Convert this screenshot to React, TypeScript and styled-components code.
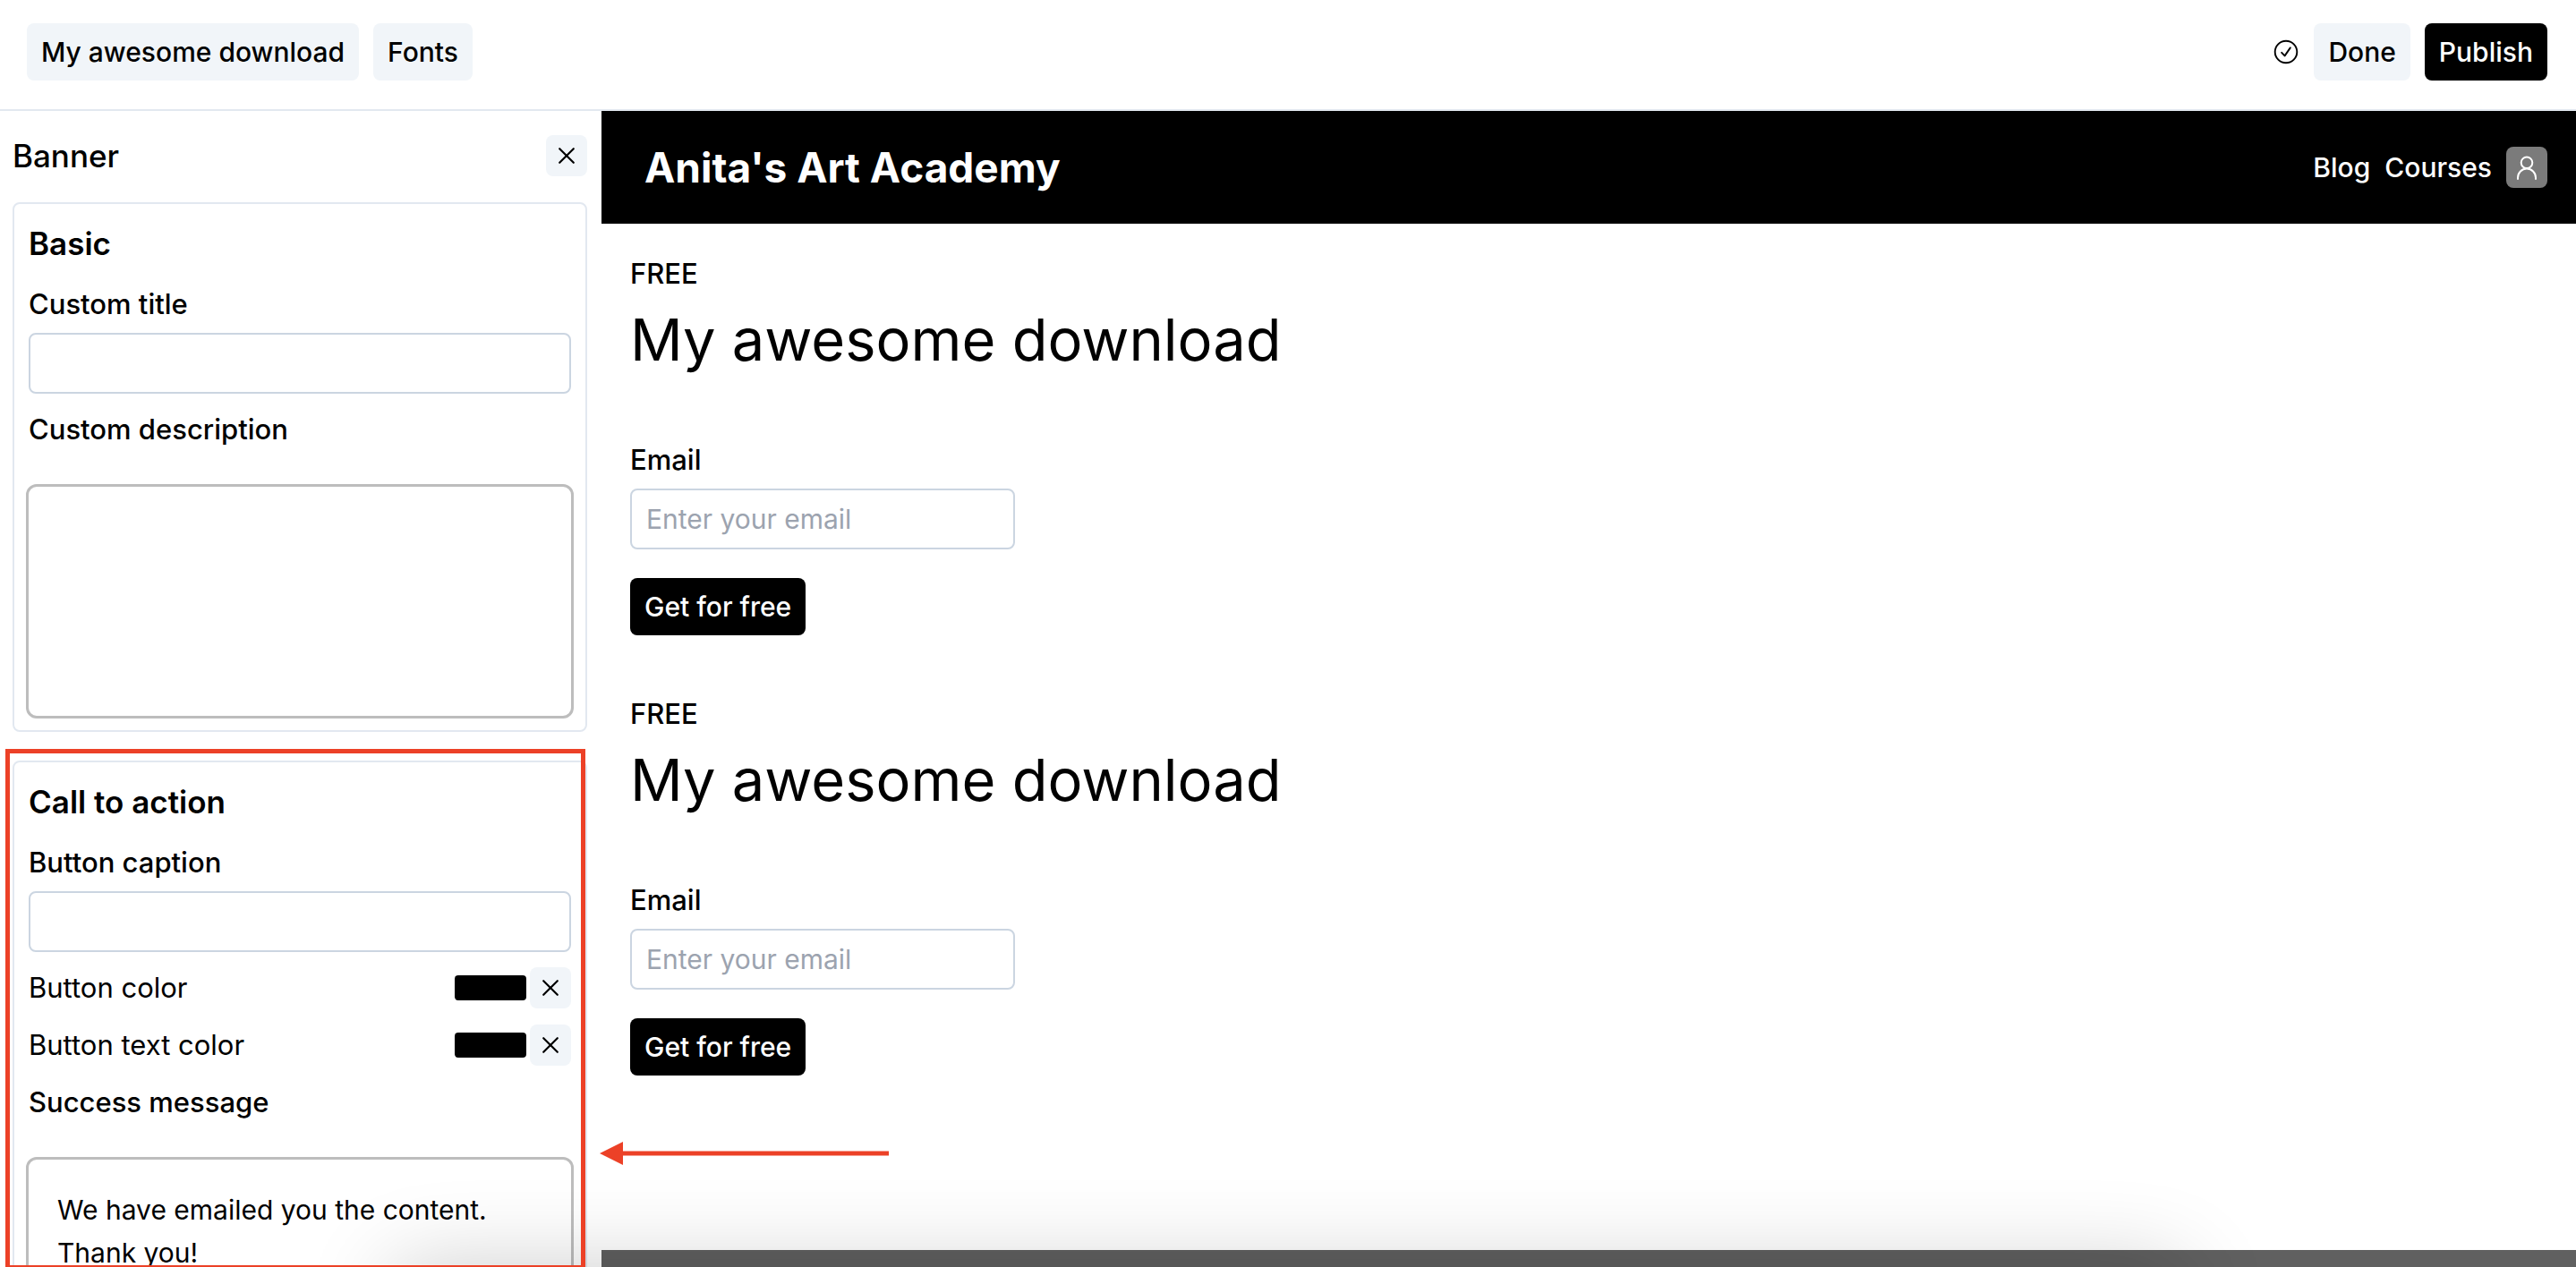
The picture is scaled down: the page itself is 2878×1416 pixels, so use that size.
import { useId } from "react";
import styled, { createGlobalStyle, css } from "styled-components";

const GlobalStyle = createGlobalStyle`
  *, *::before, *::after { box-sizing: border-box; }
  body {
    margin: 0;
    background: #fff;
    color: #000;
    font-family: Inter, "Liberation Sans", sans-serif;
    font-size: 31px;
    line-height: 48px;
  }
  button, input, textarea { font: inherit; color: inherit; }
  h1, h2, h3, p { margin: 0; font-weight: inherit; font-size: inherit; }
`;

const Page = styled.div`
  position: relative;
  display: flex;
  flex-direction: column;
  height: 100vh;
  overflow: hidden;
`;

const TopBar = styled.header`
  display: flex;
  align-items: center;
  justify-content: space-between;
  padding: 26px 32px 32px 30px;
  border-bottom: 2px solid #e2e8f0;
`;

const Group = styled.div`
  display: flex;
  align-items: center;
  gap: 16px;
`;

const Button = styled.button<{ $solid?: boolean }>`
  height: 64px;
  padding: 0 16px;
  border: 0;
  border-radius: 8px;
  font-size: 30px;
  font-weight: 500;
  white-space: nowrap;
  cursor: pointer;
  ${(p) =>
    p.$solid
      ? css`
          background: #000;
          color: #fff;
        `
      : css`
          background: #f1f5f9;
        `}
`;

const IconButton = styled.button`
  display: flex;
  padding: 8px;
  border: 0;
  border-radius: 8px;
  background: #f1f5f9;
  cursor: pointer;
`;

const Avatar = styled(IconButton)`
  background: #7b7b7b;
  color: #fff;
`;

const Body = styled.div`
  display: flex;
  flex: 1;
  min-height: 0;
`;

const Sidebar = styled.aside`
  display: flex;
  flex: 0 0 672px;
  flex-direction: column;
  gap: 32px;
  padding: 26px 16px 0 14px;
  overflow: hidden;
`;

const PanelHead = styled.div`
  display: flex;
  align-items: center;
  justify-content: space-between;
  margin-bottom: -4px;
`;

const Heading = styled.h2<{ $weight: number }>`
  && {
    font-size: 35px;
    font-weight: ${(p) => p.$weight};
  }
`;

const Card = styled.section`
  display: flex;
  flex-direction: column;
  flex-shrink: 0;
  gap: 20px;
  padding: 20px 16px 13px;
  border: 2px solid #e2e8f0;
  border-radius: 8px;
`;

const Fields = styled.div`
  display: flex;
  flex-direction: column;
  gap: 16px;
`;

const FieldBox = styled.div`
  display: flex;
  flex-direction: column;
  gap: 8px;
`;

const Label = styled.label<{ $weight?: number }>`
  font-weight: ${(p) => p.$weight ?? 500};
`;

const TextInput = styled.input`
  width: 100%;
  height: 68px;
  padding: 0 16px;
  border: 2px solid #cbd5e1;
  border-radius: 8px;
  background: #fff;
  font-size: 30px;
  &::placeholder {
    color: #9ca3af;
    opacity: 1;
  }
`;

const Editor = styled.textarea`
  display: block;
  height: 262px;
  margin: 29px -3px 0;
  padding: 32px;
  border: 3px solid #bdbdbd;
  border-radius: 12px;
  background: #fff;
  font-size: 30px;
  resize: none;
  overflow: hidden;
`;

const ColorRow = styled.div`
  display: flex;
  align-items: center;
  justify-content: space-between;
  height: 48px;
`;

const ColorTools = styled.div`
  display: flex;
  align-items: center;
  gap: 4px;
`;

const Swatch = styled.input`
  width: 80px;
  height: 28px;
  padding: 0;
  border: 0;
  border-radius: 4px;
  background: #000;
  overflow: hidden;
  &::-webkit-color-swatch-wrapper { padding: 0; }
  &::-webkit-color-swatch { border: 0; }
`;

const Preview = styled.main`
  display: flex;
  flex: 1;
  flex-direction: column;
  min-width: 0;
`;

const SiteNav = styled.nav`
  display: flex;
  align-items: center;
  justify-content: space-between;
  height: 126px;
  padding: 0 32px 0 48px;
  background: #000;
  color: #fff;
`;

const SiteName = styled.h1`
  && {
    font-size: 46px;
    font-weight: 700;
  }
`;

const NavLink = styled.a`
  color: inherit;
  font-size: 30px;
  font-weight: 500;
  text-decoration: none;
`;

const Offer = styled.section`
  display: flex;
  flex-direction: column;
  align-items: flex-start;
  padding: 32px;
`;

const Price = styled.p`
  && { font-weight: 500; }
`;

const OfferTitle = styled.h2`
  && {
    margin: 8px 0 48px;
    font-size: 65px;
    line-height: 84px;
  }
`;

const EmailField = styled(FieldBox)`
  width: 430px;
  margin: 20px 0 32px;
`;

const Footer = styled.footer`
  height: 19px;
  margin-top: auto;
  background: #606060;
`;

const BottomShadow = styled.div`
  position: absolute;
  top: 100%;
  left: 440px;
  right: 440px;
  height: 120px;
  box-shadow: 0 0 100px rgba(0, 0, 0, 0.2);
  pointer-events: none;
`;

const Highlight = styled.div`
  position: absolute;
  top: 837px;
  bottom: 0;
  left: 6px;
  width: 648px;
  border: 5px solid #ec4127;
  border-bottom-width: 2px;
  pointer-events: none;
`;

const Arrow = styled.svg`
  position: absolute;
  top: 1276px;
  left: 670px;
  pointer-events: none;
`;

const CrossIcon = () => (
  <svg width="30" height="30" viewBox="0 0 15 15" fill="none" aria-hidden="true">
    <path d="M3.6 3.6 11.4 11.4M11.4 3.6 3.6 11.4" stroke="currentColor" strokeWidth="1.1" strokeLinecap="round" />
  </svg>
);

const CheckCircleIcon = () => (
  <svg width="30" height="30" viewBox="0 0 15 15" fill="none" stroke="currentColor" role="img" aria-label="Saved">
    <circle cx="7.5" cy="7.5" r="6.15" strokeWidth="0.95" />
    <path d="M5.1 7.9 6.8 9.7 9.9 5.2" strokeWidth="0.95" strokeLinecap="round" strokeLinejoin="round" />
  </svg>
);

const PersonIcon = () => (
  <svg width="30" height="30" viewBox="0 0 30 30" fill="none" stroke="currentColor" strokeWidth="2" strokeLinecap="round" aria-hidden="true">
    <circle cx="15" cy="9.8" r="6.3" />
    <path d="M5 28v-1.500a10 10 0 0 1 20 0V28" />
  </svg>
);

function TextField({ label }: { label: string }) {
  const id = useId();
  return (
    <FieldBox>
      <Label htmlFor={id}>{label}</Label>
      <TextInput id={id} type="text" />
    </FieldBox>
  );
}

function EditorField({ label, value }: { label: string; value?: string }) {
  const id = useId();
  return (
    <FieldBox>
      <Label htmlFor={id}>{label}</Label>
      <Editor id={id} defaultValue={value} />
    </FieldBox>
  );
}

function ColorField({ label }: { label: string }) {
  const id = useId();
  return (
    <ColorRow>
      <Label htmlFor={id} $weight={400}>{label}</Label>
      <ColorTools>
        <Swatch id={id} type="color" defaultValue="#000000" />
        <IconButton aria-label={`Clear ${label.toLowerCase()}`}>
          <CrossIcon />
        </IconButton>
      </ColorTools>
    </ColorRow>
  );
}

function DownloadOffer() {
  const id = useId();
  return (
    <Offer>
      <Price>FREE</Price>
      <OfferTitle>My awesome download</OfferTitle>
      <EmailField>
        <Label htmlFor={id}>Email</Label>
        <TextInput id={id} type="email" placeholder="Enter your email" />
      </EmailField>
      <Button $solid>Get for free</Button>
    </Offer>
  );
}

export default function App() {
  return (
    <Page>
      <GlobalStyle />
      <TopBar>
        <Group>
          <Button>My awesome download</Button>
          <Button>Fonts</Button>
        </Group>
        <Group>
          <CheckCircleIcon />
          <Button>Done</Button>
          <Button $solid>Publish</Button>
        </Group>
      </TopBar>
      <Body>
        <Sidebar>
          <PanelHead>
            <Heading $weight={500}>Banner</Heading>
            <IconButton aria-label="Close">
              <CrossIcon />
            </IconButton>
          </PanelHead>
          <Card>
            <Heading $weight={600}>Basic</Heading>
            <Fields>
              <TextField label="Custom title" />
              <EditorField label="Custom description" />
            </Fields>
          </Card>
          <Card>
            <Heading $weight={600}>Call to action</Heading>
            <Fields>
              <TextField label="Button caption" />
              <ColorField label="Button color" />
              <ColorField label="Button text color" />
              <EditorField label="Success message" value={"We have emailed you the content.\nThank you!"} />
            </Fields>
          </Card>
        </Sidebar>
        <Preview>
          <SiteNav>
            <SiteName>Anita's Art Academy</SiteName>
            <Group>
              <NavLink href="#blog">Blog</NavLink>
              <NavLink href="#courses">Courses</NavLink>
              <Avatar aria-label="Account">
                <PersonIcon />
              </Avatar>
            </Group>
          </SiteNav>
          <DownloadOffer />
          <DownloadOffer />
          <Footer />
        </Preview>
      </Body>
      <BottomShadow />
      <Highlight />
      <Arrow width="324" height="26" viewBox="0 0 324 26" aria-hidden="true">
        <path d="M0 13 26 0V10.500H323V15.500H26V26Z" fill="#ec4127" />
      </Arrow>
    </Page>
  );
}
